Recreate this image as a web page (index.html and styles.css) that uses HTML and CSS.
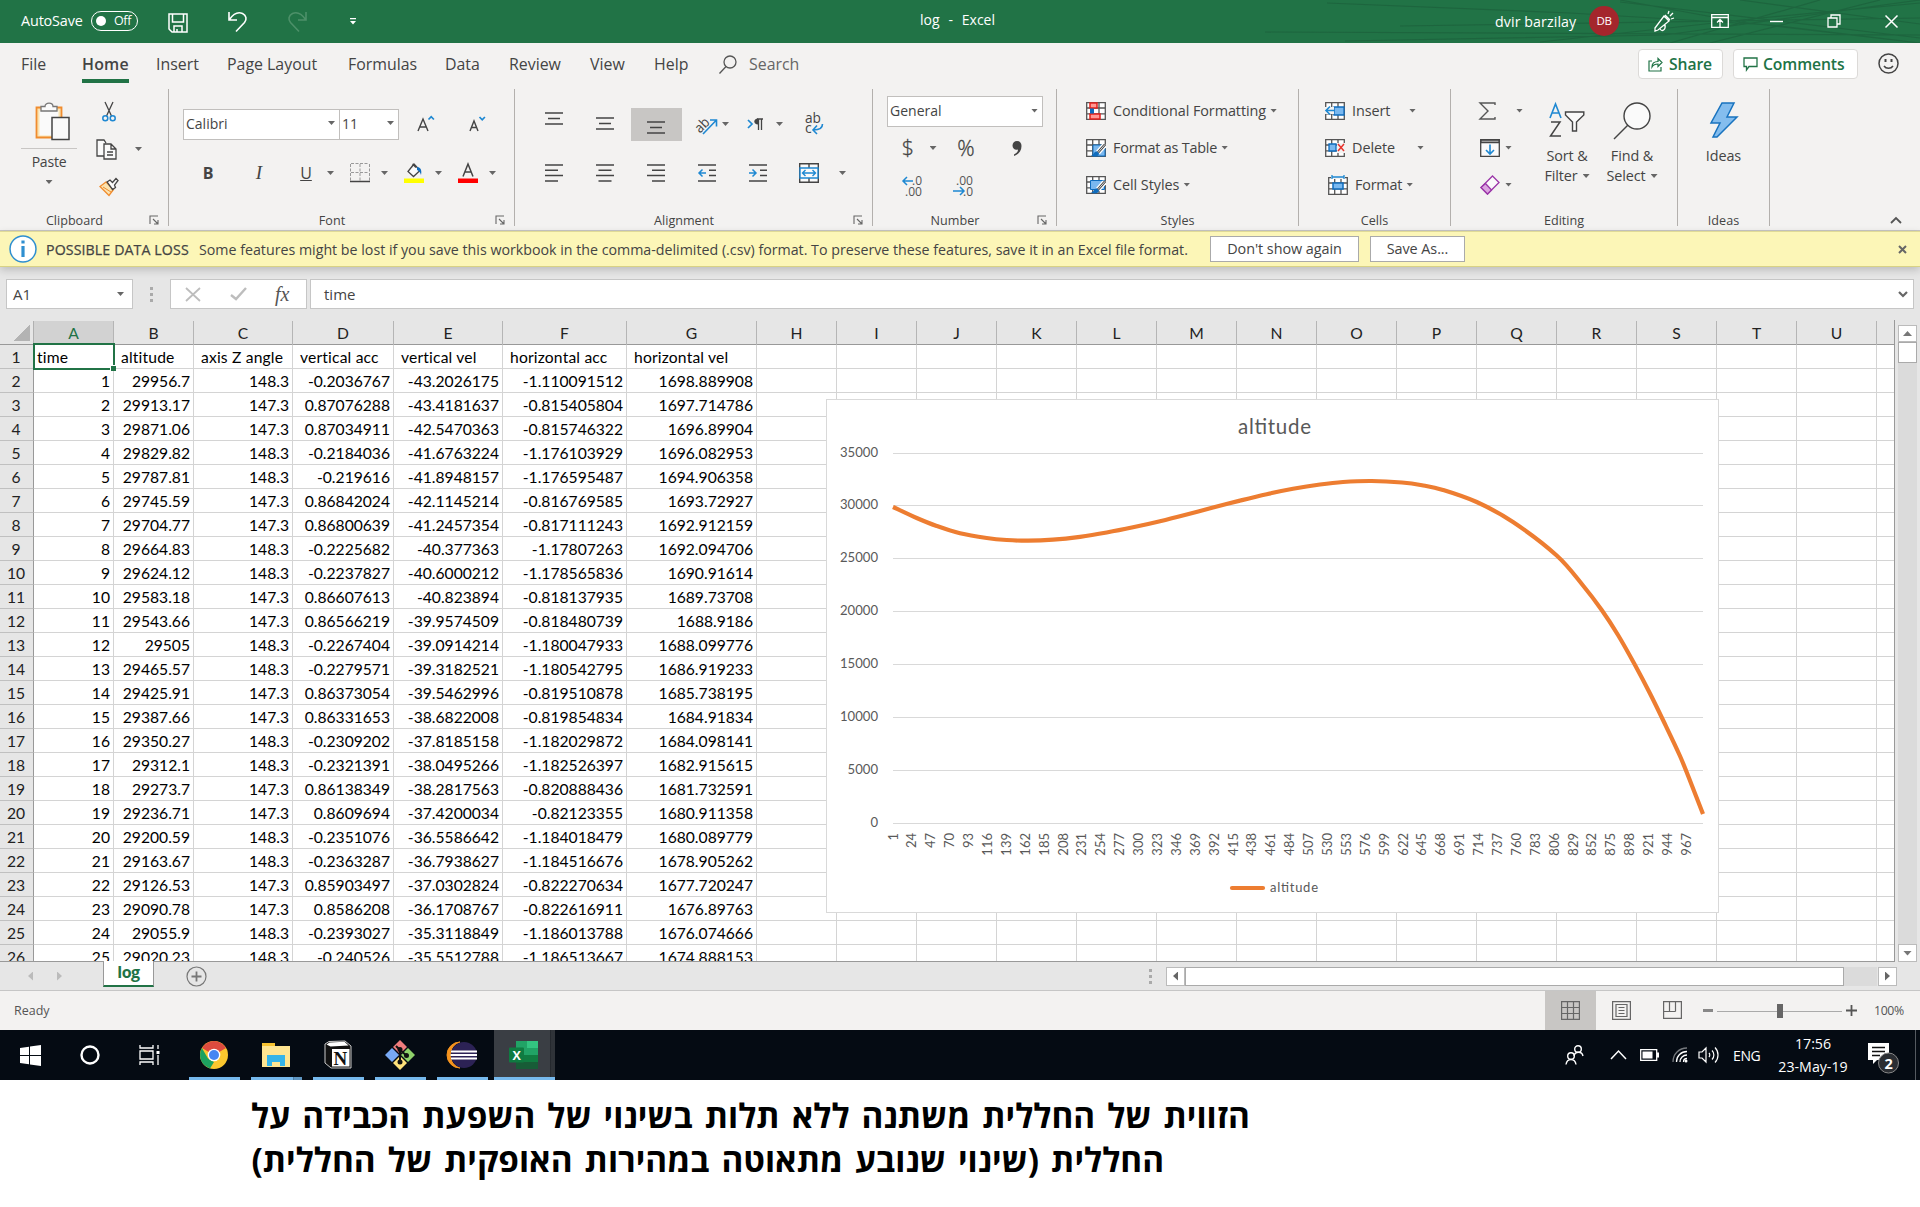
FILE: index.html
```html
<!DOCTYPE html>
<html lang="en">
<head>
<meta charset="utf-8">
<title>log - Excel</title>
<link rel="stylesheet" href="styles.css">
</head>
<body>
<svg class="defs" width="0" height="0">
  <symbol id="grid" viewBox="0 0 20 18"><path d="M.7.7h18.6v16.6H.7zM6.7 1v16M13 1v16M1 6h18M1 11.8h18" fill="#fff" stroke="#555" stroke-width="1.3"/></symbol>
  <symbol id="brush" viewBox="0 0 16 14"><path d="M15 1 8 9" stroke="#fff" stroke-width="5"/><path d="M15 1 8 9" stroke="#444" stroke-width="2.6"/><path d="M15 1 8 9" stroke="#fff" stroke-width=".8"/><path d="M7 8c-4 0-2 3-6 4 3 2 8 1 8-2z" fill="#0f6cbd"/></symbol>
  <symbol id="launch" viewBox="0 0 10 10"><path d="M1 9V1h8M4 4l5 5M9 5v4H5" fill="none" stroke="#666" stroke-width="1.1"/></symbol>
</svg>

<header class="titlebar">
  <svg class="swirl" width="680" height="43" viewBox="0 0 680 43"><g fill="none" stroke="#1b5e3a" stroke-width="1.2" opacity=".65"><path d="M87 3l243 10 200 12 150 18M25 32l655 3M105 41l320-6 255-35M160 26l520-8M380 0l120 22 180 21M430 43l150-43M470 43 640 0M380 2l300 36M300 42l220-24 160-15M500 0l180 24"/></g></svg>
  <span class="autosave">AutoSave</span>
  <span class="toggle"><i></i>Off</span>
  <svg class="save" width="20" height="20" viewBox="0 0 20 20" fill="none" stroke="#fff" stroke-width="1.5"><path d="M1 1h18v18H4l-3-3zM4.5 1v8h11V1M6 19v-6h8v6M9 19v-3"/></svg>
  <svg class="undo" width="20" height="21" viewBox="0 0 20 21" fill="none" stroke="#fff" stroke-width="1.6"><path d="M1 1v8h8M1.5 8.5C6 2 11 1 14.500 2.500c4 2 4.500 6 2 9L8 20.500"/></svg>
  <svg class="redo" width="20" height="21" viewBox="0 0 20 21" fill="none" stroke="#4d9069" stroke-width="1.6"><path d="M19 1v8h-8M18.500 8.500C14 2 9 1 5.500 2.500c-4 2-4.500 6-2 9l8.500 9"/></svg>
  <svg class="qat" width="6" height="8" viewBox="0 0 6 8" fill="#fff"><path d="M0 1h6v1.300H0zM0 4h6L3 7.500z"/></svg>
  <span class="doc">log&nbsp; - &nbsp;Excel</span>
  <span class="user">dvir barzilay</span>
  <span class="avatar">DB</span>
  <svg class="pen" width="22" height="22" viewBox="0 0 22 22" fill="none" stroke="#fff" stroke-width="1.3"><path d="M2 17 11 5l5 5L5 19l-3 1zM12 4l5 5M15 3l1-3M17 5l3-3M18 8l3-1M7 18c2 3 6 1 5-4"/></svg>
  <svg class="ribopt" width="18" height="14" viewBox="0 0 18 14" fill="none" stroke="#fff" stroke-width="1.3"><path d="M.7.7h16.600v12.600H.7zM1 3.500h16M9 13V6M6 8.500 9 5.500l3 3"/></svg>
  <svg class="min" width="13" height="13" viewBox="0 0 13 13"><path d="M0 6.500h13" stroke="#fff" stroke-width="1.4"/></svg>
  <svg class="restore" width="14" height="14" viewBox="0 0 14 14" fill="none" stroke="#fff" stroke-width="1.300"><path d="M1 4h9v9H1zM4 4V1h9v9h-3"/></svg>
  <svg class="close" width="13" height="13" viewBox="0 0 13 13"><path d="m.5.5 12 12m0-12-12 12" stroke="#fff" stroke-width="1.500"/></svg>
</header>

<nav class="tabs">
  <span class="t-file">File</span><b class="t-home">Home</b><span class="t-insert">Insert</span><span class="t-page">Page Layout</span><span class="t-form">Formulas</span><span class="t-data">Data</span><span class="t-rev">Review</span><span class="t-view">View</span><span class="t-help">Help</span>
  <svg class="lens" width="18" height="19" viewBox="0 0 18 19" fill="none" stroke="#555" stroke-width="1.300"><circle cx="11" cy="7" r="6"/><path d="m7 11.500-6.500 7"/></svg>
  <span class="t-search">Search</span>
  <a class="pill share"><svg width="15" height="15" viewBox="0 0 15 15" fill="none" stroke="#217346" stroke-width="1.200"><path d="M4 4H1v10h12v-4M4 10c0-4 2-5.500 6-5.500V1.500L14 5.500l-4 4V7C7 7 5.500 7.500 4 10z"/></svg>Share</a>
  <a class="pill comments"><svg width="15" height="14" viewBox="0 0 15 14" fill="none" stroke="#217346" stroke-width="1.300"><path d="M1 1h13v8.500H6L3.500 13V9.500H1z"/></svg>Comments</a>
  <svg class="smile" width="21" height="21" viewBox="0 0 21 21" fill="none" stroke="#444" stroke-width="1.500"><circle cx="10.500" cy="10.500" r="9.500"/><path d="M7.500 6v3M13.500 6v3" stroke-width="2"/><path d="M6 13c2 3 7 3 9 0"/></svg>
</nav>

<section class="ribbon">
  <div class="group g-clip">
    <div class="body">
      <div class="paste">
        <svg width="35" height="39" viewBox="0 0 35 39"><path d="M1.500 5.500h25v30h-25z" fill="#fbe3b0" stroke="#f08c2e" stroke-width="1.800"/><path d="M4.500 8.500h19v25h-19z" fill="#fafafa"/><path d="M6 9V4.500h4C10 0 18 0 18 4.500h4V9z" fill="#fafafa" stroke="#777" stroke-width="1.300"/><path d="M17 15.500h17v22H17z" fill="#fafafa" stroke="#444" stroke-width="1.500"/></svg>
        <span>Paste</span><i class="dd"></i>
      </div>
      <div class="cliprows">
        <div><svg width="14" height="21" viewBox="0 0 14 21" fill="none"><path d="M3 1l6.500 14M11 1 4.500 15" stroke="#444" stroke-width="1.300"/><circle cx="3.300" cy="17.200" r="2.500" stroke="#1e88d2" stroke-width="1.500"/><circle cx="10.700" cy="17.200" r="2.500" stroke="#1e88d2" stroke-width="1.500"/></svg></div>
        <div class="copy"><svg width="21" height="21" viewBox="0 0 21 21" fill="#fafafa" stroke="#444" stroke-width="1.300"><path d="M8 17H1V1h7l2 3M8 5h7l5 5v10H8zM15 5v5h5M11 13h6M11 16h6"/></svg><i class="dd"></i></div>
        <div><svg width="20" height="20" viewBox="0 0 20 20"><path d="M7 5 1 9.500l9 9 4.500-6z" fill="#fbe3b0" stroke="#f08c2e" stroke-width="1.300"/><path d="m8 5 3-2 2.500 2.500L17 1.500l2 2L15.500 8l1 2.500-3 2z" fill="#fafafa" stroke="#444" stroke-width="1.300"/><path d="m4 10 8 5" stroke="#f08c2e"/></svg></div>
      </div>
    </div>
    <div class="cap"><span>Clipboard</span><svg class="launch"><use href="#launch"/></svg></div>
  </div>

  <div class="group g-font">
    <div class="body two">
      <div class="row">
        <span class="combo c-name">Calibri<i class="dd"></i></span><span class="combo c-size">11<i class="dd"></i></span>
        <span class="slot s52"><svg width="18" height="18" viewBox="0 0 18 18" fill="none" stroke="#444" stroke-width="1.400"><path d="M1 16 6 4l5 12M2.800 12h6.500"/><path d="m11.500 4.500 2.700-2.800 2.700 2.800" stroke="#1e88d2" stroke-width="1.700"/></svg></span>
        <span class="slot s50"><svg width="18" height="18" viewBox="0 0 18 18" fill="none" stroke="#444" stroke-width="1.400"><path d="M2 16 6 6l4 10M3.500 12.500h5"/><path d="m11.500 2 2.700 2.800L16.900 2" stroke="#1e88d2" stroke-width="1.700"/></svg></span>
      </div>
      <div class="row">
        <span class="slot s50 gl"><b>B</b></span><span class="slot s52 gl ital">I</span>
        <span class="split"><u class="gl">U</u><i class="dd"></i></span>
        <span class="split"><svg width="20" height="20" viewBox="0 0 20 20" fill="none" stroke="#999"><path d="M1 .5h18M1 9.500h18M.5 1v17M10 1v17M19.500 1v17" stroke-dasharray="3 1.500"/><path d="M0 18.500h20" stroke="#444" stroke-width="1.500"/></svg><i class="dd"></i></span>
        <span class="split"><svg width="20" height="20" viewBox="0 0 20 20" fill="none"><path d="M10 1 4 8.500l5.500 5 6.500-6zM7.500 4.500 9 1.500l3 3" fill="#fafafa" stroke="#444" stroke-width="1.300"/><path d="M13 4c4 0 5 4 4 8-1-3-2-4-4-5z" fill="#0f6cbd"/><path d="M0 15.500h20v4.500H0z" fill="#ff0"/></svg><i class="dd"></i></span>
        <span class="split"><svg width="20" height="20" viewBox="0 0 20 20" fill="none"><path d="M5 13.500 10 1l5 12.500M7 9h6.500" stroke="#444" stroke-width="1.500"/><path d="M0 15.500h20v4.500H0z" fill="red"/></svg><i class="dd"></i></span>
      </div>
    </div>
    <div class="cap"><span>Font</span><svg class="launch"><use href="#launch"/></svg></div>
  </div>

  <div class="group g-align">
    <div class="body two">
      <div class="row">
        <span class="slot s51"><svg class="up" width="18" height="18" viewBox="0 0 18 18" stroke="#444" stroke-width="1.500"><path d="M0 3h18M3 8.500h12M0 14h18"/></svg></span>
        <span class="slot s51"><svg width="18" height="18" viewBox="0 0 18 18" stroke="#444" stroke-width="1.500"><path d="M0 3h18M3 8.500h12M0 14h18"/></svg></span>
        <span class="slot s51 on"><svg class="down" width="18" height="18" viewBox="0 0 18 18" stroke="#444" stroke-width="1.500"><path d="M0 3h18M3 8.500h12M0 14h18"/></svg></span>
        <svg class="orient" width="22" height="22" viewBox="0 0 22 22"><text x="-1" y="17" transform="rotate(-45 6 13)" font-size="14" font-family="Open Sans" fill="#444" textLength="15" lengthAdjust="spacingAndGlyphs">ab</text><path d="M7 21 20 7.500M14 7h6.500v6.500" fill="none" stroke="#1e88d2" stroke-width="1.600"/></svg><i class="dd"></i>
        <svg class="pilcrow" width="17" height="14" viewBox="0 0 17 14" fill="none"><path d="m1 3 4 4-4 4" stroke="#1e88d2" stroke-width="1.700"/><path d="M16 2H10M11.500 2v11M14.500 2v11" stroke="#444" stroke-width="1.300"/><path d="M11 1.500c-5 0-5 6 0 6z" fill="#444"/></svg><i class="dd"></i>
        <svg class="wrap" width="19" height="22" viewBox="0 0 19 22"><text x="0" y="10" font-size="14" font-family="Open Sans" fill="#444" textLength="16" lengthAdjust="spacingAndGlyphs">ab</text><text x="0" y="20" font-size="14" font-family="Open Sans" fill="#444">c</text><path d="M17.500 11c0 5-4 6-9 6M12 12.500 8 17l4 4" fill="none" stroke="#1e88d2" stroke-width="1.600"/></svg>
      </div>
      <div class="row">
        <span class="slot s51"><svg width="18" height="18" viewBox="0 0 18 18" stroke="#444" stroke-width="1.500"><path d="M0 1h18M0 6.300h13M0 11.500h18M0 17h13"/></svg></span>
        <span class="slot s51"><svg width="18" height="18" viewBox="0 0 18 18" stroke="#444" stroke-width="1.500"><path d="M0 1h18M2.500 6.300h13M0 11.500h18M2.500 17h13"/></svg></span>
        <span class="slot s51"><svg width="18" height="18" viewBox="0 0 18 18" stroke="#444" stroke-width="1.500"><path d="M0 1h18M5 6.300h13M0 11.500h18M5 17h13"/></svg></span>
        <span class="slot s51"><svg width="18" height="18" viewBox="0 0 18 18" fill="none" stroke="#444" stroke-width="1.500"><path d="M0 1h18M11 6.300h7M11 11.500h7M0 17h18"/><path d="M1 9h7M4.500 5.500 1 9l3.500 3.500" stroke="#1e88d2"/></svg></span>
        <span class="slot s51"><svg width="18" height="18" viewBox="0 0 18 18" fill="none" stroke="#444" stroke-width="1.500"><path d="M0 1h18M11 6.300h7M11 11.500h7M0 17h18"/><path d="M0 9h7M3.500 5.500 7 9l-3.500 3.500" stroke="#1e88d2"/></svg></span>
        <span class="slot s51"><svg width="20" height="20" viewBox="0 0 20 20" fill="#fafafa" stroke="#444" stroke-width="1.400"><path d="M.7.700h18.600v18.600H.7zM10 1v18"/><path d="M1 5h18v10H1z" stroke="#1e88d2"/><path d="M3.500 10h13M6.500 7l-3 3 3 3M13.500 7l3 3-3 3" fill="none" stroke="#1e88d2"/></svg></span>
        <i class="dd mdd"></i>
      </div>
    </div>
    <div class="cap"><span>Alignment</span><svg class="launch"><use href="#launch"/></svg></div>
  </div>

  <div class="group g-num">
    <div class="body">
      <span class="combo c-gen">General<i class="dd"></i></span>
      <div class="row r42"><span class="slot s42 big">$</span><span class="slot s8"><i class="dd"></i></span><span class="slot s58 big">%</span><span class="slot s44"><svg width="10" height="17" viewBox="0 0 10 17"><path d="M5 1c3 0 4.500 2 4.500 5 0 5-3 8.500-7.500 10v-1.500c3-1.500 4-3 4-5C3 10.500.500 8.500.500 5.500.5 3 2.500 1 5 1z" fill="#444"/></svg></span></div>
      <div class="row r34">
        <span class="slot s50"><svg width="20" height="21" viewBox="0 0 20 21"><g font-family="Open Sans" font-size="12" fill="#555"><text x="10" y="9" textLength="10" lengthAdjust="spacingAndGlyphs">.0</text><text x="3" y="20" textLength="17" lengthAdjust="spacingAndGlyphs">.00</text></g><path d="M1 5h10M5 1 1 5l4 4" fill="none" stroke="#1e88d2" stroke-width="1.500"/></svg></span>
        <span class="slot s52"><svg width="20" height="21" viewBox="0 0 20 21"><g font-family="Open Sans" font-size="12" fill="#555"><text x="3" y="9" textLength="17" lengthAdjust="spacingAndGlyphs">.00</text><text x="10" y="20" textLength="10" lengthAdjust="spacingAndGlyphs">.0</text></g><path d="M0 15h10M7 11l4 4-4 4" fill="none" stroke="#1e88d2" stroke-width="1.500"/></svg></span>
      </div>
    </div>
    <div class="cap"><span>Number</span><svg class="launch"><use href="#launch"/></svg></div>
  </div>

  <div class="group g-styles">
    <div class="body three">
      <div class="cmd"><svg width="20" height="18" viewBox="0 0 20 18"><use href="#grid"/><path d="M4 1h7v5H4zM4 12h10v5H4z" fill="#ff9a94" stroke="#e3211c" stroke-width="1.500"/><path d="M4 6.500h4v5H4z" fill="#0f6cbd"/></svg><span>Conditional Formatting</span><i class="dd"></i></div>
      <div class="cmd"><svg width="20" height="18" viewBox="0 0 20 18"><use href="#grid"/><path d="M7 6h12v11H7z" fill="#7ab8ef" stroke="#0f6cbd"/><use href="#brush" x="4" y="4.500" width="16" height="14"/></svg><span class="tight">Format as Table</span><i class="dd"></i></div>
      <div class="cmd"><svg width="20" height="18" viewBox="0 0 20 18"><use href="#grid"/><path d="M4.500 4.500h14v9h-14z" fill="#7ab8ef" stroke="#0f6cbd"/><use href="#brush" x="4" y="4.500" width="16" height="14"/></svg><span>Cell Styles</span><i class="dd"></i></div>
    </div>
    <div class="cap"><span>Styles</span></div>
  </div>

  <div class="group g-cells">
    <div class="body three">
      <div class="cmd ins"><svg width="20" height="18" viewBox="0 0 20 18"><use href="#grid"/><path d="M9 5h10v8H9z" fill="#7ab8ef" stroke="#0f6cbd" stroke-width="1.300"/><path d="M0 5h9v7H0z" fill="#f3f2f1"/><path d="M1 8.500h9M5 4.500l-4 4 4 4" fill="none" stroke="#1e88d2" stroke-width="1.600"/></svg><span>Insert</span><i class="dd"></i></div>
      <div class="cmd del"><svg width="20" height="18" viewBox="0 0 20 18"><use href="#grid"/><path d="M4 5h7v7H4z" fill="#7ab8ef" stroke="#0f6cbd" stroke-width="1.300"/><path d="M12 4h8v10h-8z" fill="#f3f2f1"/><path d="m13 5 6 7m0-7-6 7" stroke="#e8322c" stroke-width="1.500"/></svg><span>Delete</span><i class="dd"></i></div>
      <div class="cmd fmt"><svg width="20" height="20" viewBox="0 0 20 20"><use href="#grid" y="2" width="20" height="18"/><path d="M5 8h10v6H5z" fill="#7ab8ef" stroke="#0f6cbd" stroke-width="1.500"/><path d="M3 0h14v4H3z" fill="#f3f2f1"/><path d="M4 2h12M4 0v4M16 0v4" stroke="#1e88d2" stroke-width="1.300"/></svg><span class="tight">Format</span><i class="dd"></i></div>
    </div>
    <div class="cap"><span>Cells</span></div>
  </div>

  <div class="group g-edit">
    <div class="body">
      <div class="edrows">
        <div class="e1"><svg width="17" height="18" viewBox="0 0 17 18" fill="none" stroke="#555" stroke-width="1.400"><path d="M16 3V1H1l8 8-8 8h15v-2"/></svg><i class="dd"></i></div>
        <div class="e2"><svg width="20" height="18" viewBox="0 0 20 18" fill="#fafafa" stroke="#444" stroke-width="1.300"><path d="M.700.700h18.600v16.600H.7z"/><path d="M1 1h18v2.500H1z" fill="#bbb"/><path d="M10 5.500v9M6 11l4 4 4-4" fill="none" stroke="#1e88d2" stroke-width="1.600"/></svg><i class="dd"></i></div>
        <div class="e2"><svg width="20" height="20" viewBox="0 0 20 20" fill="#fafafa" stroke="#9a35a8" stroke-width="1.300"><path d="M12.500 1 19 7.500 7.500 19 1 12.500z"/><path d="m5.500 8.500 6 6.500-4 4L1 12.500z" fill="#dba4e0"/></svg><i class="dd"></i></div>
      </div>
      <div class="bigbtn b-sort"><svg width="36" height="37" viewBox="0 0 36 37" fill="none"><path d="M1 16 6.500 2 12 16M3 11h7" stroke="#1e88d2" stroke-width="1.600"/><path d="M2 20h9L1.500 34H12" stroke="#444" stroke-width="1.500"/><path d="M16.500 10h18.300v3l-7.300 7v9h-4v-9l-7-7z" fill="#fafafa" stroke="#444" stroke-width="1.400"/></svg><span>Sort &amp;</span><span>Filter<i class="dd"></i></span></div>
      <div class="bigbtn b-find"><svg width="38" height="37" viewBox="0 0 38 37" stroke="#444" stroke-width="1.400"><circle cx="24" cy="14" r="13" fill="#fafafa"/><path d="M15 23 1 37"/></svg><span>Find &amp;</span><span>Select<i class="dd"></i></span></div>
    </div>
    <div class="cap"><span>Editing</span></div>
  </div>

  <div class="group g-ideas">
    <div class="body"><div class="bigbtn b-idea"><svg width="28" height="37" viewBox="0 0 28 37"><path d="M12 1h12l-7 14h10L7 35H3l7-14H1z" fill="#84bdee" stroke="#1873bf" stroke-width="1.500"/></svg><span>Ideas</span></div></div>
    <div class="cap"><span>Ideas</span></div>
  </div>
  <svg class="collapse" width="12" height="8" viewBox="0 0 12 8"><path d="m1 7 5-5 5 5" fill="none" stroke="#555" stroke-width="1.800"/></svg>
</section>

<section class="notice">
  <svg width="28" height="28" viewBox="0 0 28 28"><circle cx="14" cy="14" r="13" fill="#fff" stroke="#2f8fd0" stroke-width="1.500"/><path d="M14 11v11" stroke="#2f8fd0" stroke-width="3.200"/><path d="M14 5.500v3" stroke="#2f8fd0" stroke-width="3.200"/></svg>
  <span class="warn">POSSIBLE DATA LOSS</span>
  <span class="msg">Some features might be lost if you save this workbook in the comma-delimited (.csv) format. To preserve these features, save it in an Excel file format.</span>
  <a class="btn b1">Don't show again</a><a class="btn b2">Save As...</a>
  <svg class="x" width="9" height="9" viewBox="0 0 9 9"><path d="m1 1 7 7m0-7-7 7" stroke="#666" stroke-width="2"/></svg>
</section>

<section class="formula">
  <span class="namebox">A1<i class="dd"></i></span>
  <span class="dots"><i></i><i></i><i></i></span>
  <span class="fx"><svg width="16" height="15" viewBox="0 0 16 15"><path d="m1 1 14 13M15 1 1 14" stroke="#bdbdbd" stroke-width="1.800"/></svg><svg width="17" height="14" viewBox="0 0 17 14"><path d="m1 8 5 4L16 1" fill="none" stroke="#bdbdbd" stroke-width="2.400"/></svg><em>fx</em></span>
  <span class="input">time<svg width="10" height="7" viewBox="0 0 10 7"><path d="m1 1 4 4 4-4" fill="none" stroke="#666" stroke-width="2.200"/></svg></span>
</section>

<main class="work">
  <div class="sheet" id="sheet"></div>
  <div class="vscroll"><span class="sb"><i class="au"></i></span><span class="vthumb"></span><span class="vtrack"></span><span class="sb dn"><i class="ad"></i></span></div>
  <svg class="chart" id="chart" width="893" height="514" viewBox="826 399 893 514"></svg>
</main>

<div class="sheetbar">
  <i class="al pale"></i><i class="ar pale"></i>
  <span class="tab">log</span>
  <svg class="plus" width="21" height="21" viewBox="0 0 21 21" fill="none" stroke="#777"><circle cx="10.500" cy="10.500" r="9.500" stroke-width="1.200"/><path d="M10.500 5.500v10M5.500 10.500h10" stroke-width="1.800"/></svg>
  <span class="dots"><i></i><i></i><i></i></span>
  <span class="hb"><i class="al"></i></span><span class="hthumb"></span><span class="htrack"></span><span class="hb r"><i class="ar"></i></span>
</div>

<footer class="status">
  <span class="ready">Ready</span>
  <span class="view sel"><svg width="19" height="19" viewBox="0 0 19 19" fill="none" stroke="#666" stroke-width="1.200"><path d="M.6.600h17.800v17.800H.6zM6.500 1v17M12.500 1v17M1 6.500h17M1 12.500h17"/></svg></span>
  <span class="view"><svg width="19" height="19" viewBox="0 0 19 19" fill="none" stroke="#666" stroke-width="1.200"><path d="M.6.600h17.800v17.800H.6zM4 3.500h11v12H4zM6.500 6.500h6M6.500 9.500h6M6.500 12.500h6"/></svg></span>
  <span class="view"><svg width="19" height="19" viewBox="0 0 19 19" fill="none" stroke="#666" stroke-width="1.200"><path d="M.6.600h17.800v16.800H.6zM6.500 1v9.500M12.500 1v9.500M1 10.500h11.500"/></svg></span>
  <i class="zminus"></i><span class="slider"><i></i></span>
  <svg class="zplus" width="11" height="11" viewBox="0 0 11 11"><path d="M5.500 0v11M0 5.500h11" stroke="#555" stroke-width="1.800"/></svg>
  <span class="pct">100%</span>
</footer>

<div class="taskbar">
  <svg class="win" width="21" height="21" viewBox="0 0 21 21" fill="#fff"><path d="M0 3 9 1.700V10H0zM10 1.500 21 0v10H10zM0 11h9v8.300L0 18zM10 11h11v10l-11-1.500z"/></svg>
  <svg class="cort" width="20" height="20" viewBox="0 0 20 20"><circle cx="10" cy="10" r="8.500" fill="none" stroke="#fff" stroke-width="2.400"/></svg>
  <svg class="tv" width="22" height="20" viewBox="0 0 22 20" fill="none" stroke="#fff" stroke-width="1.300"><path d="M1 0v3h13V0M1 20v-3h13v3M1 6h13v8H1zM19 0v4M19 10v10"/><path d="M17.500 6h3v3h-3z" fill="#fff" stroke="none"/></svg>
  <span class="app"><svg width="28" height="28" viewBox="0 0 28 28"><circle cx="14" cy="14" r="14" fill="#fbc72e"/><path d="M14 14 1.900 7A14 14 0 0 1 26.100 7z" fill="#dd4b3e"/><path d="M1.900 7 8 17.500l6 3.500-4 6.400A14 14 0 0 1 1.900 7z" fill="#1da260"/><circle cx="14" cy="14" r="6.300" fill="#fff"/><circle cx="14" cy="14" r="5" fill="#4586f3"/></svg></span>
  <span class="app multi"><svg width="28" height="26" viewBox="0 0 28 26"><path d="M0 1h11l2 3h15v21H0z" fill="#ffe591"/><path d="M0 1h13v3H0z" fill="#f7c331"/><path d="M5 24V13h18v11h-5v-4h-8v4z" fill="#36b4e8"/></svg></span>
  <span class="app"><svg width="28" height="28" viewBox="0 0 28 28"><path d="M1 3 5 .500 21 0l6 5v22H7l-6-5z" fill="#111" stroke="#ccc"/><path d="m2.500 3.500 3-2 15-.700 4 3.700-18 1z" fill="#fff"/><path d="M8 8h17.500v17.500H8z" fill="#fff"/><text x="9.500" y="23.500" font-family="Liberation Serif" font-weight="bold" font-size="19" fill="#111">N</text></svg></span>
  <span class="app"><svg width="30" height="30" viewBox="0 0 30 30"><path d="m15 0 7 7-7 7-7-7z" fill="#f07d7d"/><path d="m23 8 7 7-7 7-7-7z" fill="#8fd16a"/><path d="m15 16 7 7-7 7-7-7z" fill="#ffe27a"/><path d="m7 8 7 7-7 7-7-7z" fill="#78a9f5"/><path d="m11 6 4 4v13M15 10l7 6" stroke="#111" stroke-width="2" fill="none"/><circle cx="15" cy="9.500" r="2.500" fill="#111"/><circle cx="15" cy="22" r="2.500" fill="#111"/><circle cx="21.500" cy="15.500" r="2.500" fill="#111"/></svg></span>
  <span class="app"><svg width="30" height="28" viewBox="0 0 30 28"><path d="M13 1a13 13 0 0 0 0 26A13.500 13.500 0 0 1 13 1z" fill="#f7941e" stroke="#f7941e"/><circle cx="17" cy="14" r="13" fill="#2c2255"/><path d="M4 10.500h26M3.500 14h26.500M4 17.500h26" stroke="#fff" stroke-width="1.800"/></svg></span>
  <span class="app cur"><svg width="30" height="28" viewBox="0 0 30 28"><path d="M7 0h22v28H7z" fill="#185c37"/><path d="M7 0h11v14H7z" fill="#21a366"/><path d="M18 0h11v7H18z" fill="#33c481"/><path d="M18 7h11v7H18z" fill="#21a366"/><path d="M7 14h22v7H7z" fill="#107c41"/><rect y="6.500" width="15" height="15" rx="1" fill="#0f7b41"/><text x="3.500" y="18.500" font-family="Open Sans" font-weight="bold" font-size="12.500" fill="#fff">X</text></svg></span>
  <svg class="people" width="19" height="20" viewBox="0 0 19 20" fill="none" stroke="#fff" stroke-width="1.400"><circle cx="13" cy="4" r="3.300"/><path d="M9 11c1-5 8-5 9 0"/><circle cx="6" cy="11" r="3.300"/><path d="M1 19.500c1-6.500 9-6.500 10 0"/></svg>
  <svg class="chev" width="17" height="10" viewBox="0 0 17 10"><path d="m1 9 7.500-8L16 9" fill="none" stroke="#fff" stroke-width="1.500"/></svg>
  <svg class="bat" width="19" height="12" viewBox="0 0 19 12"><path d="M.7.700h16v10.600H.7z" fill="none" stroke="#fff" stroke-width="1.300"/><path d="M2.500 2.500h10v7h-10zM17 3.500h2v5h-2z" fill="#fff"/></svg>
  <svg class="wifi" width="16" height="16" viewBox="0 0 16 16" fill="none" stroke="#fff" stroke-width="1.300"><path d="M1 15C1 7 7 1 15 1" opacity=".45"/><path d="M4.500 15C4.500 9 9 4.500 15 4.500M8 15c0-4 3-7 7-7"/><path d="M11.500 15c0-2 1.500-3.500 3.500-3.500"/><circle cx="14" cy="14" r="1.500" fill="#fff" stroke="none"/></svg>
  <svg class="vol" width="21" height="18" viewBox="0 0 21 18" fill="none" stroke="#fff" stroke-width="1.200"><path d="M1 6v6h3l4 4V2L4 6zM11 7c1 1 1 3 0 4M14 4.500c2.500 2.500 2.500 6.500 0 9M17 1.500c4 4 4 11 0 15"/></svg>
  <span class="eng">ENG</span>
  <span class="clock"><span>17:56</span><span>23-May-19</span></span>
  <svg class="note" width="32" height="32" viewBox="0 0 32 32"><path d="M0 0h21v17H9l-4 4v-4H0z" fill="#fff"/><path d="M4 4.500h13M4 8.500h13M4 12.500h8" stroke="#111" stroke-width="1.300"/><circle cx="20.500" cy="20" r="10" fill="#2b2e33" stroke="#888"/><text x="16.500" y="25.500" font-family="Open Sans" font-weight="bold" font-size="14.500" fill="#fff">2</text></svg>
  <i class="peek"></i>
</div>

<article class="caption" dir="rtl" lang="he">
  <p class="l1">הזווית של החללית משתנה ללא תלות בשינוי של השפעת הכבידה על</p>
  <p class="l2">החללית (שינוי שנובע מתאוטה במהירות האופקית של החללית)</p>
</article>
<script src="app.js"></script>
</body>
</html>
```
FILE: styles.css
```css
*, *::before, *::after { box-sizing: border-box; }
body { margin: 0; width: 1920px; height: 1207px; overflow: hidden; background: #fff; color: #444; font: 14.4px "Open Sans", "Noto Sans", sans-serif; }
svg { display: block; flex: none; overflow: visible; }
i { font-style: normal; }
.defs { position: absolute; }
span, a, b { white-space: nowrap; }
.dd { flex: none; display: inline-block; width: 7px; height: 4px; background: #666; clip-path: polygon(0 0, 100% 0, 50% 100%); }

.titlebar { position: relative; display: flex; align-items: center; height: 43px; background: #217346; color: #fff; padding-bottom: 2px; overflow: hidden; }
.titlebar > * { flex: none; position: relative; }
.titlebar .swirl { position: absolute; left: 1240px; top: 0; }
.autosave { margin-left: 21px; width: 63px; font-size: 14.4px; letter-spacing: -.15px; }
.toggle { display: flex; align-items: center; width: 47px; height: 20px; margin-left: 7px; border: 1px solid #fff; border-radius: 10px; font-size: 12.5px; letter-spacing: -.4px; }
.toggle i { width: 10px; height: 10px; border-radius: 5px; background: #fff; margin: 0 8px 0 4px; }
.save { margin: 5px 0 0 30px; }
.undo { margin: 2px 0 0 40px; }
.redo { margin: 2px 0 0 39px; }
.qat { margin-left: 43px; }
.doc { margin-left: 564px; width: 79px; font-size: 14px; letter-spacing: 0; word-spacing: .8px; margin-top: -2px; }
.user { margin: 2px 0 0 496px; width: 83px; font-size: 14.2px; letter-spacing: .1px; }
.avatar { margin: 1px 0 0 11px; width: 30px; height: 30px; border-radius: 15px; background: #a4262c; font-size: 11.5px; line-height: 30px; text-align: center; letter-spacing: -.3px; }
.pen { margin: 3px 0 0 34px; }
.ribopt { margin-left: 36px; }
.min { margin-left: 41px; margin-top: 1px; }
.restore { margin-left: 44px; }
.close { margin-left: 44px; margin-top: 1px; }

.tabs { display: flex; align-items: center; height: 46px; background: #f3f2f1; font-size: 15.9px; padding-bottom: 4px; }
.tabs > * { flex: none; }
.tabs > span, .t-home { line-height: 42px; }
.t-file { margin-left: 21px; width: 61px; }
.t-home { width: 47px; margin-right: 27px; height: 42px; font-weight: 600; letter-spacing: .2px; background: linear-gradient(#217346, #217346) 0 36px / 48px 4px no-repeat; }
.t-insert { width: 71px; }
.t-page { width: 121px; }
.t-form { width: 97px; }
.t-data { width: 64px; }
.t-rev { width: 81px; }
.t-view { width: 64px; }
.t-help { width: 65px; }
.t-search { margin-left: 12px; width: 889px; color: #666; }
.lens { width: 18px; }
.pill { display: flex; align-items: center; height: 30px; background: #fff; border: 1px solid #dcdad8; border-radius: 4px; color: #217346; font-weight: 600; font-size: 15.7px; letter-spacing: -.1px; padding-left: 9px; gap: 6px; }
.share { width: 85px; }
.comments { width: 125px; margin-left: 10px; gap: 5px; }
.smile { margin-left: 20px; margin-top: -1px; }

.ribbon { position: relative; display: flex; height: 142px; background: #f3f2f1; border-bottom: 1px solid #c8c6c4; }
.group { display: flex; flex-direction: column; height: 137px; border-right: 1px solid #b3b0ad; }
.body { display: flex; height: 121px; padding-top: 3px; }
.cap { display: flex; height: 16px; align-items: center; font-size: 12.600px; padding-top: 4px; }
.cap span { flex: 1; text-align: center; }
.launch { width: 10px; height: 10px; margin-right: 9px; }
.g-clip { width: 169px; }
.g-font { width: 346px; }
.g-align { width: 358px; }
.g-num { width: 184px; }
.g-styles { width: 242px; }
.g-cells { width: 152px; }
.g-edit { width: 227px; }
.g-ideas { width: 92px; }
.paste { display: flex; flex-direction: column; align-items: center; width: 56px; margin: 10px 0 0 21px; }
.paste svg { margin-left: 6px; }
.paste span { margin-top: 7px; padding-top: 2px; width: 56px; border-top: 1px solid #c8c6c4; text-align: center; line-height: 22px; font-size: 14px; letter-spacing: -.2px; }
.paste .dd { margin-top: 7px; }
.cliprows { margin-left: 6px; }
.cliprows div { width: 52px; height: 38px; display: flex; align-items: center; justify-content: center; }
.cliprows .copy { width: 64px; justify-content: flex-start; padding-left: 13px; gap: 18px; }
.row { display: flex; align-items: center; flex: none; }
.slot { display: flex; align-items: center; justify-content: center; flex: none; height: 33px; }
.s8 { width: 8px; } .s42 { width: 42px; } .s44 { width: 44px; } .s50 { width: 50px; } .s51 { width: 51px; } .s52 { width: 52px; } .s58 { width: 58px; }
.two { flex-direction: column; padding: 10px 0 0 14px; }
.two .row { height: 50px; }
.two .row + .row { margin-top: -1px; }
.combo { display: flex; align-items: center; justify-content: space-between; background: #fff; border: 1px solid #c1bfbd; height: 31px; padding: 0 4px 2px 2px; font-size: 14px; }
.c-name { width: 157px; }
.c-size { width: 60px; margin-left: -1px; margin-right: 1px; }
.gl { font-size: 16px; }
.ital { font-family: "Liberation Serif", serif; font-style: italic; font-size: 19px; }
.split { display: flex; align-items: center; width: 50px; margin-right: 4px; flex: none; }
.split > :first-child { width: 42px; text-align: center; }
.g-align .on { background: #c8c6c4; }
.g-align .slot svg { position: relative; left: -1px; }
.up { margin-top: -10px; }
.down { margin-top: 8px; }
.orient { margin: 0 4px 0 14px; }
.pilcrow { margin: 0 12px 0 18px; }
.wrap { margin-left: 22px; }
.mdd { margin-left: 4px; }
.g-num .body { flex-direction: column; padding: 7px 0 0 14px; }
.c-gen { width: 156px; }
.r42 { height: 42px; }
.r34 { height: 34px; }
.r34 svg { margin-left: -1px; }
.big { font-size: 21.500px; font-weight: 300; padding-bottom: 2px; -webkit-text-stroke: .3px #444; }
.three { flex-direction: column; padding: 3px 0 0 29px; }
.cmd { display: flex; align-items: center; height: 37px; }
.cmd span { margin: 0 4px 0 7px; letter-spacing: -.06px; }
.cmd .tight { letter-spacing: -.2px; }
.g-cells .three { padding-left: 26px; }
.ins span { width: 53px; }
.del span { width: 61px; }
.fmt { padding-left: 3px; }
.edrows { width: 91px; padding-left: 28px; }
.edrows div { display: flex; align-items: center; height: 37px; }
.e1 { gap: 20px; }
.e2 { gap: 5px; padding-left: 1px; }
.bigbtn { display: flex; flex-direction: column; align-items: center; padding-top: 10px; letter-spacing: -.1px; }
.bigbtn span { line-height: 20px; }
.bigbtn svg { margin-bottom: 7px; }
.bigbtn .dd { margin: 0 0 3px 5px; }
.b-sort { width: 50px; }
.b-find { width: 52px; margin-left: 14px; }
.b-idea { width: 92px; }
.collapse { position: absolute; right: 18px; bottom: 6px; }

.notice { position: relative; z-index: 1; display: flex; align-items: center; height: 36px; background: #fcf6b7; border-bottom: 1px solid #d8d285; border-top: 1px solid #e0da97; padding-left: 9px; box-shadow: 0 3px 8px rgba(0,0,0,.18); }
.notice > * { flex: none; }
.warn { margin-left: 9px; width: 153px; font-size: 14.200px; letter-spacing: .1px; -webkit-text-stroke: .25px #444; }
.msg { width: 1011px; font-size: 14.220px; }
.btn { height: 26px; line-height: 24px; background: #fff; border: 1px solid #aaa; text-align: center; font-size: 14.400px; letter-spacing: -.05px; }
.b1 { width: 149px; }
.b2 { width: 95px; margin-left: 11px; }
.x { margin-left: 433px; }

.formula { display: flex; height: 53px; background: #e6e6e6; padding: 12px 0 0 6px; font-size: 15px; }
.formula > span { height: 30px; border: 1px solid #c6c6c6; background: #fff; display: flex; align-items: center; }
.namebox { width: 127px; justify-content: space-between; padding: 0 8px 0 6px; }
.formula > .dots { width: 37px; border: 0; background: none; }
.dots { display: flex; flex-direction: column; justify-content: center; gap: 3px; align-items: center; }
.dots i { width: 3px; height: 3px; background: #aaa; }
.fx { width: 137px; padding-left: 14px; gap: 29px; }
.fx em { font-family: "Liberation Serif", serif; font-size: 20px; line-height: 20px; color: #555; margin-left: -1px; }
.input { width: 1604px; margin-left: 3px; padding: 0 5px 0 13px; justify-content: space-between; }

.work { position: relative; display: flex; height: 642px; background: #e6e6e6; }
.sheet { width: 1895px; overflow: hidden; border-right: 1px solid #999; border-bottom: 1px solid #999; background: #fff; font: 15.650px "Lato", sans-serif; color: #000; }
.hdr, .line { display: grid; grid-template-columns: 34px 80px 80px 99px 101px 109px 124px 130px repeat(15, 80px); }
.hdr { height: 25px; background: #e6e6e6; border-bottom: 1px solid #999; }
.hdr span { border-right: 1px solid #b5b5b5; text-align: center; line-height: 24px; margin-top: 1px; color: #222; }
.hdr .corner { border-right-color: #b0b0b0; background: linear-gradient(135deg, transparent 50%, #b3b3b3 50%) 14px 4px / 16px 16px no-repeat; }
.hdr .act, .line .act { background: #d2d2d2; color: #217346; }
.line { height: 24px; }
.line span { border-right: 1px solid #d4d4d4; border-bottom: 1px solid #d4d4d4; line-height: 24px; height: 24px; text-align: right; padding-right: 3px; }
.line .rh { background: #e6e6e6; text-align: center; padding: 0 1px 0 0; border-right-color: #999; border-bottom-color: #c0c0c0; color: #222; }
.line .head { text-align: left; padding-left: 7px; letter-spacing: .17px; }
.line .first { padding-left: 3px; position: relative; }
.first::before { content: ""; position: absolute; left: -1px; top: -2px; width: 82px; height: 27px; border: 2px solid #217346; }
.first::after { content: ""; position: absolute; right: -3px; bottom: -3px; width: 6px; height: 6px; background: #217346; border: solid #fff; border-width: 1px 0 0 1px; }
.vscroll { display: flex; flex-direction: column; width: 19px; margin: 5px 0 0 3px; }
.sb, .hb { display: flex; align-items: center; justify-content: center; border: 1px solid #bbb; background: #fff; }
.sb { height: 17px; }
.vthumb { height: 21px; background: #fff; border: 1px solid #aaa; }
.vtrack { flex: 1; background: #dbdbdb; }
.dn { height: 18px; }
.au, .ad { width: 9px; height: 5px; background: #777; clip-path: polygon(50% 0, 100% 100%, 0 100%); }
.ad { clip-path: polygon(0 0, 100% 0, 50% 100%); }
.al, .ar { width: 5px; height: 9px; background: #666; clip-path: polygon(100% 0, 100% 100%, 0 50%); }
.ar { clip-path: polygon(0 0, 100% 50%, 0 100%); }
.chart { position: absolute; left: 826px; top: 79px; font-family: "Lato", sans-serif; fill: #595959; }

.sheetbar { display: flex; height: 29px; background: #e6e6e6; border-bottom: 1px solid #c6c6c6; align-items: center; }
.sheetbar > * { flex: none; }
.pale { background: #bbb; }
.sheetbar > .al { margin-left: 28px; }
.sheetbar > .ar { margin-left: 24px; }
.tab { align-self: flex-start; margin: -1px 0 0 41px; width: 51px; height: 26px; background: #fff; border: 1px solid #999; border-top: 0; border-bottom: 2px solid #217346; text-align: center; font: bold 16px/23px "Open Sans", sans-serif; letter-spacing: -.5px; color: #217346; position: relative; }
.plus { margin-left: 32px; }
.sheetbar .dots { margin-left: 942px; width: 3px; }
.hb { width: 19px; height: 19px; margin-left: 14px; }
.hthumb { width: 659px; height: 19px; background: #fff; border: 1px solid #aaa; }
.htrack { width: 33px; height: 19px; background: #dbdbdb; }
.hb.r { margin-left: 1px; }

.status { display: flex; align-items: center; height: 39px; background: #f3f2f1; font-size: 12.500px; color: #555; }
.status > * { flex: none; }
.ready { margin-left: 14px; width: 1531px; }
.view { width: 51px; height: 39px; display: flex; align-items: center; justify-content: center; }
.sel { background: #c8c6c4; }
.zminus { width: 10px; height: 3px; background: #888; margin-left: 5px; }
.slider { width: 125px; height: 14px; margin-left: 4px; display: flex; justify-content: center; background: linear-gradient(#aaa, #aaa) 0 7px / 125px 1px no-repeat; }
.slider i { width: 6px; height: 14px; background: #666; }
.zplus { margin-left: 4px; }
.pct { font-size: 12.300px; letter-spacing: -.4px; margin-left: 17px; }

.taskbar { display: flex; align-items: center; height: 50px; background: #050b13; color: #fff; }
.taskbar > * { flex: none; }
.win { margin-left: 20px; }
.cort { margin-left: 39px; }
.tv { margin: 0 28px 0 39px; }
.app { display: flex; align-items: center; justify-content: center; width: 51px; height: 50px; margin-right: 11px; border-bottom: 3px solid #76b9ed; padding: 3px 2px 0 0; }
.multi { border-image: linear-gradient(90deg, #76b9ed 78%, #40698c 78%, #5f96c2 81%) 3; }
.cur { width: 61px; margin: 0 0 0 -5px; background: linear-gradient(90deg, #3a3e44 92%, #202429 92%, #2f3338 94%); }
.people { margin-left: 1010px; }
.chev { margin-left: 26px; }
.bat { margin-left: 13px; }
.wifi { margin-left: 13px; }
.vol { margin-left: 10px; }
.eng { margin-left: 14px; width: 30px; font-size: 14px; letter-spacing: -.4px; }
.clock { display: flex; flex-direction: column; align-items: center; width: 100px; font-size: 14.200px; line-height: 23px; }
.note { margin: 7px 0 0 5px; }
.peek { width: 1px; height: 50px; margin-left: 15px; background: #555a60; }

.caption { width: 1000px; margin-left: 250px; padding-top: 13px; color: #000; font: bold 33.300px/44px "Open Sans", "DejaVu Sans", sans-serif; word-spacing: 3.400px; }
.caption p { margin: 0; white-space: nowrap; }
.l2 { padding-right: 86px; }
```
FILE: app.js
```js
const headers = ["time", "altitude", "axis Z angle", "vertical acc", "vertical vel", "horizontal acc", "horizontal vel"];
const data = `29956.7 148.3 -0.2036767 -43.2026175 -1.110091512 1698.889908
29913.17 147.3 0.87076288 -43.4181637 -0.815405804 1697.714786
29871.06 147.3 0.87034911 -42.5470363 -0.815746322 1696.89904
29829.82 148.3 -0.2184036 -41.6763224 -1.176103929 1696.082953
29787.81 148.3 -0.219616 -41.8948157 -1.176595487 1694.906358
29745.59 147.3 0.86842024 -42.1145214 -0.816769585 1693.72927
29704.77 147.3 0.86800639 -41.2457354 -0.817111243 1692.912159
29664.83 148.3 -0.2225682 -40.377363 -1.17807263 1692.094706
29624.12 148.3 -0.2237827 -40.6000212 -1.178565836 1690.91614
29583.18 147.3 0.86607613 -40.823894 -0.818137935 1689.73708
29543.66 147.3 0.86566219 -39.9574509 -0.818480739 1688.9186
29505 148.3 -0.2267404 -39.0914214 -1.180047933 1688.099776
29465.57 148.3 -0.2279571 -39.3182521 -1.180542795 1686.919233
29425.91 147.3 0.86373054 -39.5462996 -0.819510878 1685.738195
29387.66 147.3 0.86331653 -38.6822008 -0.819854834 1684.91834
29350.27 148.3 -0.2309202 -37.8185158 -1.182029872 1684.098141
29312.1 148.3 -0.2321391 -38.0495266 -1.182526397 1682.915615
29273.7 147.3 0.86138349 -38.2817563 -0.820888436 1681.732591
29236.71 147.3 0.8609694 -37.4200034 -0.82123355 1680.911358
29200.59 148.3 -0.2351076 -36.5586642 -1.184018479 1680.089779
29163.67 148.3 -0.2363287 -36.7938627 -1.184516676 1678.905262
29126.53 147.3 0.85903497 -37.0302824 -0.822270634 1677.720247
29090.78 147.3 0.8586208 -36.1708767 -0.822616911 1676.89763
29055.9 148.3 -0.2393027 -35.3118849 -1.186013788 1676.074666
29020.23 148.3 -0.240526 -35.5512788 -1.186513667 1674.888153`.split("\n").map((r, i) => [i + 1, ...r.split(" ")]);

const cell = (t, c) => `<span class="${c || ""}">${t}</span>`;
const blanks = n => Array(n).fill(cell("")).join("");
let html = `<div class="hdr">${cell("", "corner")}${[..."ABCDEFGHIJKLMNOPQRSTU"].map((l, i) => cell(l, i ? "" : "act")).join("")}${cell("")}</div>`;
html += `<div class="line">${cell(1, "rh act")}${headers.map((h, i) => cell(h, i ? "head" : "head first")).join("")}${blanks(15)}</div>`;
data.forEach((r, i) => { html += `<div class="line">${cell(i + 2, "rh")}${r.map(v => cell(v)).join("")}${blanks(15)}</div>`; });
document.getElementById("sheet").innerHTML = html;

// Altitude line: sampled points joined by a Catmull-Rom spline.
const p = [[893,507],[916.7,518],[936.700,526],[960,533.3],[986.7,538],[1006.7,540],[1028,540.7],[1053,539.7],[1080,536.8],[1106.7,532.5],[1133,527.3],[1160,521.2],[1186.7,514.5],[1213,507.5],[1240,500.600],[1266.7,494.200],[1293,488.800],[1320,484.500],[1343,482],[1371.7,481],[1402,482.500],[1422,485.200],[1443,489.900],[1476.700,502],[1513,522],[1556.7,555.5],[1583,585.5],[1601.7,610],[1618,635],[1635,665],[1650,693.500],[1663,720],[1680,756],[1691.7,785],[1703,814]];
let d = `M${p[0]}`;
for (let i = 0; i < p.length - 1; i++) {
  const a = p[i - 1] || p[i], b = p[i], c = p[i + 1], e = p[i + 2] || c;
  d += `C${b[0] + (c[0] - a[0]) / 6} ${b[1] + (c[1] - a[1]) / 6} ${c[0] - (e[0] - b[0]) / 6} ${c[1] - (e[1] - b[1]) / 6} ${c}`;
}
let s = `<rect x="826.5" y="399.5" width="892" height="513" fill="#fff" stroke="#d9d9d9"/>`;
[453, 505, 558, 611, 664, 717, 770, 823].forEach((y, i) => {
  s += `<path d="M893 ${y + .5}H1703" stroke="#d9d9d9"/><text x="878" y="${y + 4}" font-size="13.1" text-anchor="end">${35000 - i * 5000}</text>`;
});
for (let k = 0; k < 43; k++) s += `<text transform="translate(${897.5 + k * 18.89} 833) rotate(-90)" font-size="13" text-anchor="end">${1 + 23 * k}</text>`;
s += `<path d="${d}" fill="none" stroke="#ed7d31" stroke-width="4.2"/>`;
s += `<text x="1238" y="434" font-size="20.500" textLength="73">altitude</text><path d="M1232 888h31" stroke="#ed7d31" stroke-width="4.2" stroke-linecap="round"/><text x="1270" y="892" font-size="13" textLength="48">altitude</text>`;
document.getElementById("chart").innerHTML = s;
```
